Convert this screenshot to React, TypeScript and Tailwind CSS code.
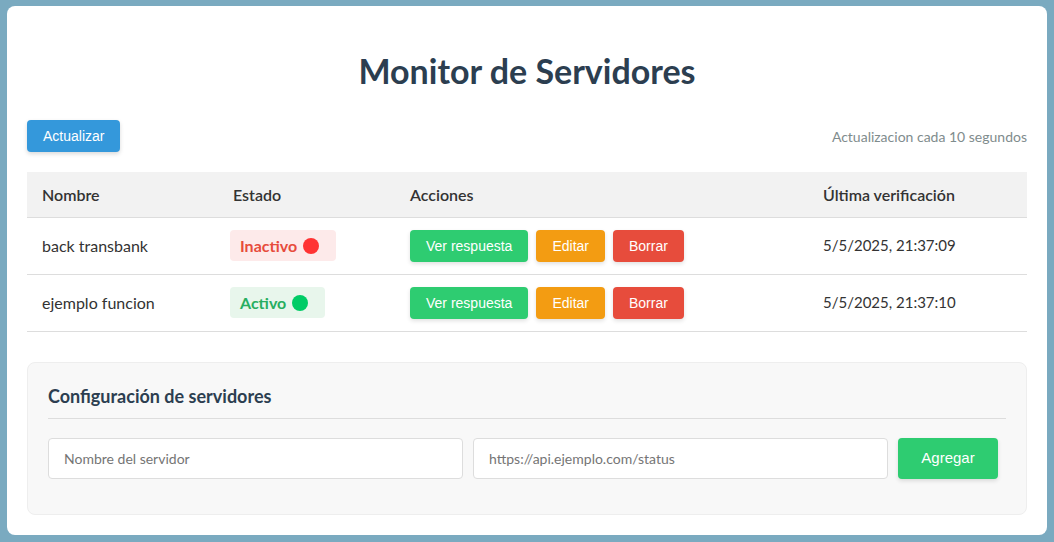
const servers = [
  { name: "back transbank", active: false, checked: "5/5/2025, 21:37:09" },
  { name: "ejemplo funcion", active: true, checked: "5/5/2025, 21:37:10" },
];

const seg = { fontFamily: "'Segoe UI', Lato, 'Noto Sans', sans-serif" };
const arial = { fontFamily: "'Liberation Sans', Arial, sans-serif" };

const ActionButton = ({ label, color }: { label: string; color: string }) => (
  <button
    style={arial}
    className={`h-8 px-4 text-sm text-white rounded shadow-[0_2px_4px_rgba(0,0,0,0.12)] ${color}`}
  >
    {label}
  </button>
);

const StatusBadge = ({ active }: { active: boolean }) => (
  <span
    className={`inline-flex items-center h-[31px] pl-[10px] pr-[17px] rounded text-base font-bold ${
      active ? "bg-[#e8f6ec] text-[#27ae60]" : "bg-[#fdeaea] text-[#e74c3c]"
    }`}
  >
    {active ? "Activo" : "Inactivo"}
    <span className={`ml-[6px] w-4 h-4 rounded-full ${active ? "bg-[#00cc66]" : "bg-[#ff3333]"}`} />
  </span>
);

export default function App() {
  return (
    <div style={seg} className="min-h-[542px] bg-[#7aaac0] pt-[6px] pb-[7px]">
      <div className="w-[1040px] mx-auto bg-white rounded-lg px-5 pt-5 pb-5 text-[#333]">
        {/* Title */}
        <h1 className="mt-[25px] h-10 leading-10 text-center text-[34px] font-bold text-[#2c3e50]">
          Monitor de Servidores
        </h1>

        {/* Toolbar */}
        <div className="mt-[29px] flex items-center justify-between">
          <button
            style={arial}
            className="h-8 px-4 bg-[#3498db] text-white text-sm rounded shadow-[0_2px_4px_rgba(0,0,0,0.15)]"
          >
            Actualizar
          </button>
          <span className="text-sm text-[#7f8c8d] pt-[2px]">Actualizacion cada 10 segundos</span>
        </div>

        {/* Table */}
        <table className="mt-5 w-full border-collapse text-left text-base">
          <thead>
            <tr className="bg-[#f2f2f2] border-b border-[#ddd] h-[45px]">
              <th className="pl-[15px] pt-[2px] w-[191px] font-semibold">Nombre</th>
              <th className="pl-[15px] pt-[2px] w-[177px] font-semibold">Estado</th>
              <th className="pl-[15px] pt-[2px] w-[413px] font-semibold">Acciones</th>
              <th className="pl-[15px] pt-[2px] font-semibold">Última verificación</th>
            </tr>
          </thead>
          <tbody>
            {servers.map((s) => (
              <tr key={s.name} className="border-b border-[#ddd] h-[57px]">
                <td className="pl-[15px]">{s.name}</td>
                <td className="pl-[12px]">
                  <StatusBadge active={s.active} />
                </td>
                <td className="pl-[15px]">
                  <div className="flex gap-2">
                    <ActionButton label="Ver respuesta" color="bg-[#2ecc71]" />
                    <ActionButton label="Editar" color="bg-[#f39c12]" />
                    <ActionButton label="Borrar" color="bg-[#e74c3c]" />
                  </div>
                </td>
                <td className="pl-[15px] text-[15px]">{s.checked}</td>
              </tr>
            ))}
          </tbody>
        </table>

        {/* Config */}
        <div className="mt-[30px] bg-[#f8f8f8] border border-[#eee] rounded-lg px-5 pt-5 pb-[35px]">
          <h2 className="h-[26px] leading-[26px] text-lg font-bold text-[#2c3e50] mb-[9px]">
            Configuración de servidores
          </h2>
          <div className="border-b border-[#ddd]" />
          <div className="mt-[19px] flex gap-[10px] pr-2">
            <input
              placeholder="Nombre del servidor"
              className="flex-1 h-[41px] px-[15px] bg-white border border-[#ddd] rounded text-sm placeholder:text-[#757575] outline-none"
            />
            <input
              placeholder="https://api.ejemplo.com/status"
              className="flex-1 h-[41px] px-[15px] bg-white border border-[#ddd] rounded text-sm placeholder:text-[#757575] outline-none"
            />
            <button
              style={arial}
              className="w-[100px] h-[41px] bg-[#2ecc71] text-white text-[15px] rounded shadow-[0_2px_4px_rgba(0,0,0,0.12)]"
            >
              Agregar
            </button>
          </div>
        </div>
      </div>
    </div>
  );
}
